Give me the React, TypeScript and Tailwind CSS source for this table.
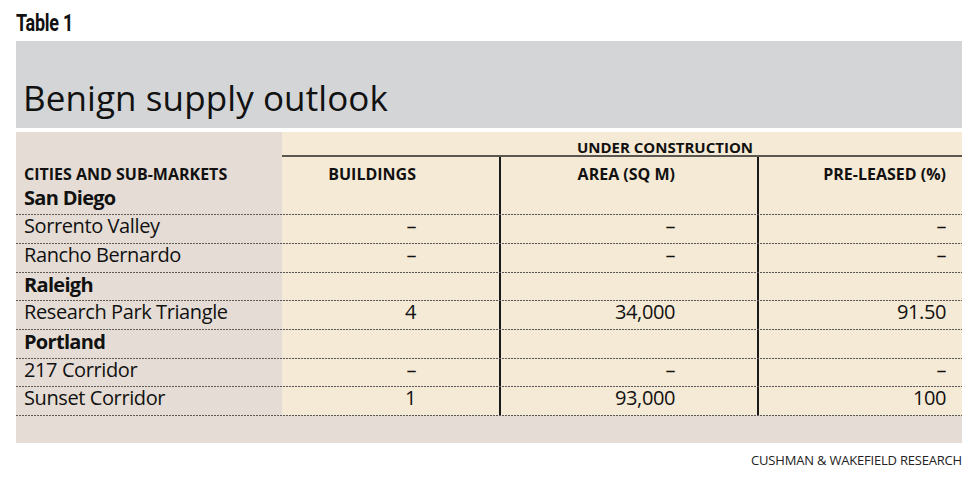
import React from "react";

type Row = { name: string; bold?: boolean; b?: string; a?: string; p?: string; h: string };

const rows: Row[] = [
  { name: "San Diego", bold: true, h: "h-[28px]" },
  { name: "Sorrento Valley", b: "–", a: "–", p: "–", h: "h-[28px]" },
  { name: "Rancho Bernardo", b: "–", a: "–", p: "–", h: "h-[28px]" },
  { name: "Raleigh", bold: true, h: "h-[27px]" },
  { name: "Research Park Triangle", b: "4", a: "34,000", p: "91.50", h: "h-[28px]" },
  { name: "Portland", bold: true, h: "h-[28px]" },
  { name: "217 Corridor", b: "–", a: "–", p: "–", h: "h-[27px]" },
  { name: "Sunset Corridor", b: "1", a: "93,000", p: "100", h: "h-[28px]" },
];

function Dotted() {
  return (
    <div className="h-px w-full bg-[linear-gradient(to_right,#5e5a55_0,#5e5a55_2px,transparent_2px,transparent_3px)] bg-[length:3px_1px] bg-repeat-x" />
  );
}

export default function App() {
  return (
    <div className="w-[979px] h-[479px] bg-white font-['Open_Sans',sans-serif] text-[#111111] overflow-hidden">
      <div className="pl-[16px] pt-[12px] h-[41px]">
        <div className="inline-block origin-left scale-x-[0.78] font-['Roboto',sans-serif] font-bold text-[23px] leading-[24px] tracking-[-0.3px] text-[#111]">
          Table 1
        </div>
      </div>
      <div className="mx-[16px] w-[946px] h-[87px] bg-[#d4d5d7] pl-[7px] pt-[37px]">
        <div className="text-[35px] leading-[40px] tracking-[0.1px] text-[#111]">Benign supply outlook</div>
      </div>
      <div className="h-[4px]" />
      <div className="mx-[16px] w-[946px] bg-[#e5ddd5]">
        <div className="flex h-[23px]">
          <div className="w-[266px]" />
          <div className="w-[680px] bg-[#f5ead5] pl-[86px] pt-[5px] text-center font-bold text-[15px] leading-[20px]">
            UNDER CONSTRUCTION
          </div>
        </div>
        <div className="flex h-[2px]">
          <div className="w-[266px]" />
          <div className="w-[680px] bg-[#5b5650]" />
        </div>
        <div className="flex h-[29px] font-bold text-[16px] leading-[20px]">
          <div className="w-[266px] pl-[8px] pt-[7px]">CITIES AND SUB-MARKETS</div>
          <div className="w-[217px] bg-[#f5ead5] pr-[83px] pt-[7px] text-right">BUILDINGS</div>
          <div className="w-[258px] border-l-2 border-[#1a1a1a] bg-[#f5ead5] pr-[82px] pt-[7px] text-right">AREA (SQ M)</div>
          <div className="w-[205px] border-l-2 border-[#1a1a1a] bg-[#f5ead5] pr-[16px] pt-[7px] text-right">PRE-LEASED (%)</div>
        </div>
        {rows.map((r, i) => (
          <div key={i}>
            <div className={`flex ${r.h} text-[20px] leading-[22px] tracking-[-0.4px]`}>
              <div className={`w-[266px] pl-[8px] ${r.bold ? "font-bold pt-px tracking-[-0.7px]" : ""}`}>{r.name}</div>
              <div className="w-[217px] bg-[#f5ead5] pr-[83px] text-right">{r.b}</div>
              <div className="w-[258px] border-l-2 border-[#1a1a1a] bg-[#f5ead5] pr-[82px] text-right">{r.a}</div>
              <div className="w-[205px] border-l-2 border-[#1a1a1a] bg-[#f5ead5] pr-[16px] text-right">{r.p}</div>
            </div>
            <Dotted />
          </div>
        ))}
        <div className="h-[27px]" />
      </div>
      <div className="mx-[16px] w-[946px] mt-[8px] text-right text-[13px] leading-[18px] tracking-[-0.2px] text-[#222]">
        CUSHMAN &amp; WAKEFIELD RESEARCH
      </div>
    </div>
  );
}
